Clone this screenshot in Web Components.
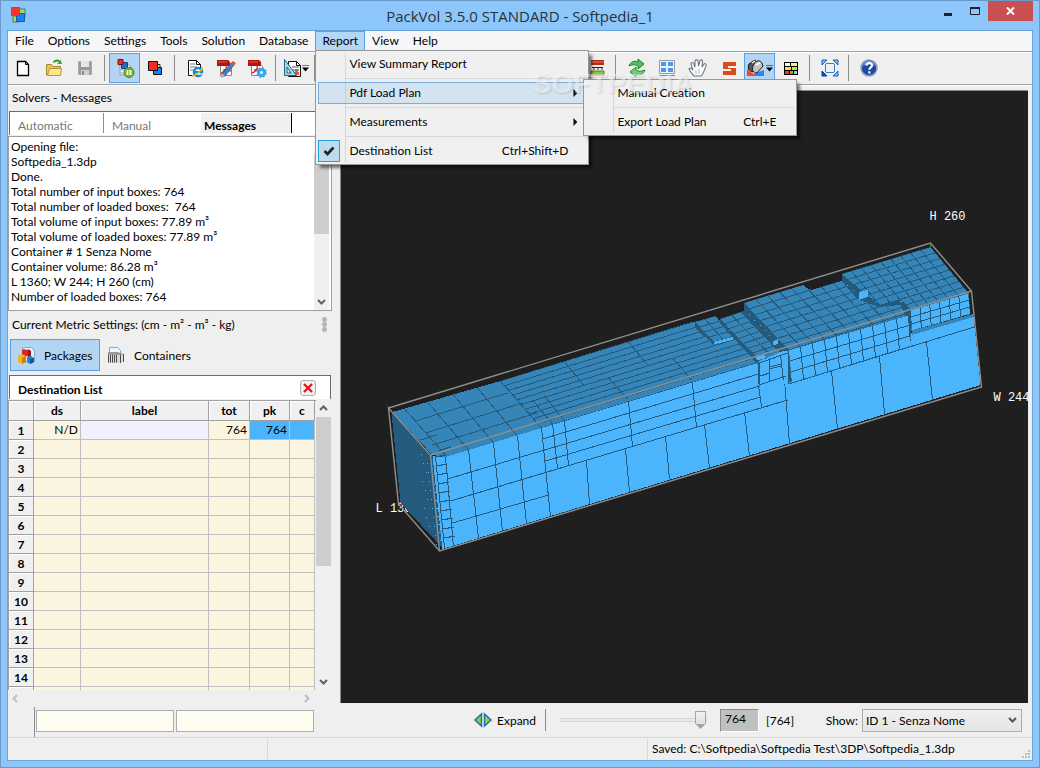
<!DOCTYPE html>
<html lang="en">
<head>
<meta charset="utf-8">
<title>PackVol 3.5.0 STANDARD - Softpedia_1</title>
<style>
  html, body { margin: 0; height: 100%; overflow: hidden; }
  body { font: 12px/15px Lato, "Open Sans", sans-serif; color: #000; background: #efefef; }
</style>
</head>
<body>
<pack-window></pack-window>
<script>
const define = (name, css, html, init) => {
  const tpl = document.createElement('template');
  tpl.innerHTML = `<style>*{box-sizing:border-box}button{font:inherit;color:inherit;margin:0}${css}</style>${html}`;
  customElements.define(name, class extends HTMLElement {
    constructor() {
      super();
      this.attachShadow({ mode: 'open' }).append(tpl.content.cloneNode(true));
    }
    connectedCallback() {
      if (init && !this.ready) { this.ready = true; init(this, this.shadowRoot); }
    }
  });
};

/* ---------- icons, all on a 20 x 20 grid ---------- */
const page = (x, y) => `<path d="M${x} ${y}h8l4 4v11h-12z" fill="#fff" stroke="#111" stroke-width="1"/><path d="M${x + 8} ${y}v4h4" fill="none" stroke="#111"/>`;
const pdf = '<path d="M4.500 4.500v13h11v-9l-4-4z" fill="#fff" stroke="#888"/><path d="M1 2h11l2 2v4H1z" fill="#b8120c"/><path d="M2 4h9" stroke="#e0564c"/><path d="M5 15c4-1 6-5 5-7M7 12c3-1 6 1 8 1" fill="none" stroke="#d3281c" stroke-width="1.300"/>';
const ICONS = {
  app: '<path d="M9 4h8v8H9z" fill="#9edb6b" stroke="#527b4c"/><path d="M5 11h6v6H5z" fill="#9edb6b" stroke="#527b4c"/><path d="M8.500 8.500h8v8h-8z" fill="#1283f5" stroke="#1c5a9c"/><path d="M3.500 2.500h8v8h-8z" fill="#ff302b" stroke="#a34b55"/>',
  fresh: '<path d="M3.500 3.500h8l3 3v11h-11z" fill="#fff" stroke="#000" stroke-width="1.300"/><path d="M11.500 3.500v3h3" fill="none" stroke="#000"/>',
  open: '<path d="M1.500 17V6.500h5l1 2h8V17z" fill="#e9c64f" stroke="#a98a2b"/><path d="M2.500 17.500l2-7h12l-1 7z" fill="#fbe88e" stroke="#b8962f"/><path d="M8 4c2-3 5-3 7-1v-2l2 5h-5l2-1.500c-2-2-3-1-5 .500z" fill="#33a02c"/>',
  save: '<path d="M2.500 3.500h13v13h-13z" fill="#9b9b9b" stroke="#a8a8a8"/><path d="M5 3h8v6H5z" fill="#e6e6e6"/><path d="M5 12h8v5H5z" fill="#cfcfcf"/><path d="M6 13h2v4H6z" fill="#8b8b8b"/>',
  pause: '<path d="M5 7h9l3 3v7H5z" fill="#fff" stroke="#8a98a8"/><path d="M5 12h7M5 15h6" stroke="#6da7d8"/><path d="M6.500 4.500h6v6h-6z" fill="#1272d8" stroke="#123f78"/><path d="M3 1.500h5v5H3z" fill="#fb2722" stroke="#711"/><circle cx="14" cy="14.500" r="5" fill="#74b71c" stroke="#4f8610"/><path d="M12.500 12v5M15.500 12v5" stroke="#fff" stroke-width="1.800"/>',
  cubes: '<path d="M9 6.500h5v4H9z" fill="#f6ee4d" stroke="#222"/><path d="M7.500 9.500h8v7h-8z" fill="#1283f5" stroke="#111"/><path d="M2.500 3.500h9v9h-9z" fill="#fb2722" stroke="#111"/>',
  web: page(3.5, 2.5) + '<path d="M5 6h5M5 9h7M5 12h3" stroke="#777"/><circle cx="13" cy="14" r="4" fill="#fff" stroke="#178ad0" stroke-width="2.600"/><path d="M10 14h7" stroke="#178ad0" stroke-width="2"/><path d="M14 16h5" stroke="#fff" stroke-width="1"/><path d="M7 18c3 0 11-6 10-9" fill="none" stroke="#e8b91f" stroke-width="1.500"/>',
  pdfedit: pdf + '<path d="M6 16l9-11 3 2-9 11-4 1z" fill="#3c83cf" stroke="#214f83" stroke-width=".700"/><path d="M15 5l2-2 3 2-2 2.500z" fill="#e2541f"/><path d="M5 19l1-3 3 2z" fill="#efc48a"/>',
  pdfgear: pdf + '<circle cx="14.500" cy="14.500" r="3" fill="#fff" stroke="#39a5ea" stroke-width="3"/><circle cx="14.500" cy="14.500" r="4.600" fill="none" stroke="#39a5ea" stroke-width="1.400" stroke-dasharray="2 1.600"/>',
  ruler: page(6.5, 3.5) + '<path d="M10 9h7M10 12h7" stroke="#555"/><path d="M11 14h6v3h-6z" fill="#ee5b1c"/><path d="M13 11h3v3h-3z" fill="#2f8fe0"/><path d="M2.500 1.500v16h12z" fill="#a9d9ee" stroke="#20637f"/><path d="M5 9v6h4z" fill="#efefef" stroke="#20637f"/>',
  layers: '<path d="M4 2h13v5H4z" fill="#b62b18"/><path d="M4 4h13" stroke="#e0796a"/><path d="M5 9.500h11" stroke="#222"/><path d="M6 11h2M10 11h2M14 11h2" stroke="#444"/><path d="M4 13h13v4H4z" fill="#8dc63c" stroke="#55802a"/>',
  refresh: '<path d="M3 8c1-4 6-6 9-4V1l6 5-6 5V8c-4-2-6-1-9 0z" fill="#4fc158" stroke="#23822c"/><path d="M19 12c-1 4-6 6-9 4v3l-6-5 6-5v3c4 2 6 1 9 0z" fill="#6dd474" stroke="#23822c"/>',
  panes: '<path d="M2.500 2.500h15v13h-15z" fill="#eaf3fd" stroke="#9a9a9a"/><path d="M4 4h5v4H4zM11 4h5v4h-5zM4 10h5v4H4zM11 10h5v4h-5z" fill="#4a97f0"/><path d="M2 17.500h16" stroke="#888"/>',
  hand: '<path d="M6 18c-2-2-4-5-5-7 1-2 3 0 4 1L3 6c0-2 2-2 3 0l1 3V3c1-2 3-1 3 0l.500 5 1.500-5c1-2 3-1 2.500 1L14 9l2-3c1-1 3 0 2 2-2 4-2 8-5 10z" fill="#fbfbfb" stroke="#6d7683" stroke-width="1.100"/><path d="M8 12v4M11 11v5" stroke="#b6bdc6"/>',
  snake: '<path d="M4 4h13v4H9v2h8v7H4v-4h8v-2H4z" fill="#dd4a1d"/>',
  view: '<path d="M1 11l6 5 11-4v6H1z" fill="#f2432c"/><path d="M10 14h8v4h-8z" fill="#2b86f0"/><path d="M3 6l6-4 3 6-5 6c-4-1-6-4-4-8z" fill="#555" stroke="#111"/><path d="M8 6c2-4 6-4 8-1l1 3-6 7c-4 0-6-4-3-9z" fill="#c4c4c4" stroke="#222"/><path d="M10 7l4-2M6 5l3-2" stroke="#fff" stroke-width="1.500"/>',
  tiles: '<path d="M3 4h14v13H3z" fill="#000"/><path d="M4 5h5v3H4z" fill="#fff"/><path d="M10 5h6v3h-6z" fill="#fff27a"/><path d="M4 9h6v3H4z" fill="#ffdf3c"/><path d="M11 9h5v3h-5z" fill="#b5e655"/><path d="M4 13h4v3H4z" fill="#f0381d"/><path d="M9 13h3v3H9z" fill="#f07a1d"/><path d="M13 13h3v3h-3z" fill="#7fd8f5"/>',
  fit: '<path d="M6 5.500h8M6 14.500h8M5.500 6v8M14.500 6v8" stroke="#2d7fd3"/><path d="M2 2h5L2 7zM18 2v5l-5-5zM18 18h-5l5-5z" fill="#7fc1ee" stroke="#1662b0"/><path d="M2 18v-5l5 5z" fill="#1251c9" stroke="#0d3c97"/>',
  help: '<circle cx="10" cy="10" r="8" fill="#1d48a8" stroke="#9aa2b2" stroke-width="1.600"/><path d="M4 8a6 6 0 0 1 12 0c-4-2-8-2-12 0z" fill="#5f8ae0"/><path d="M7.500 7.500c0-3.500 5.500-3.500 5.500 0 0 2-2.700 1.800-2.700 4.200" fill="none" stroke="#fff" stroke-width="2"/><path d="M9.200 13.300h2.200v2.200H9.200z" fill="#fff"/>',
  packages: '<path d="M6.500 2.500h9l3 3v11h-12z" fill="#e3effb" stroke="#86a5cf"/><path d="M7 4l5 1v6l-6 1V6z" fill="#e1251c"/><path d="M12 4l3 2v5l-3 2z" fill="#a3140e"/><path d="M2 11l4-2 4 2v6l-4 2-4-2z" fill="#f7b51c"/><path d="M6 13l4-2v6l-4 2z" fill="#c98108"/><path d="M11 12l4-1 3 2v4l-4 2-3-2z" fill="#1789d4"/><path d="M14 14l4-1v4l-4 2z" fill="#0c5a97"/>',
  containers: '<path d="M3.500 11V2.500h8l3 3V9" fill="#edf5fe" stroke="#86a5cf"/><path d="M2 7h9l7 2v8l-5 1H2z" fill="#dcdcdc"/><path d="M2.500 7.500v10M4.500 7.500v10M6.500 7.500v10M8.500 7.500v10M10.500 7.500v10M14.500 9v9M17.500 9v8" stroke="#4b4b4b"/><path d="M2 7h9l7 2-5 1H2z" fill="#999"/>',
  expand: '<path d="M8.500 4v12l-6.500-6z" fill="#8cd92d" stroke="#2968ba" stroke-width="1.500"/><path d="M11.500 4v12l6.500-6z" fill="#8cd92d" stroke="#2968ba" stroke-width="1.500"/>'
};
define('ui-icon', ':host{display:block;width:20px;height:20px;flex:none}svg{display:block;width:100%;height:100%}',
  '<svg viewBox="0 0 20 20" aria-hidden="true"></svg>',
  (el, r) => { r.querySelector('svg').innerHTML = ICONS[el.getAttribute('name')]; });

/* ---------- title bar ---------- */
define('title-bar', `
  :host{display:grid;grid-template-columns:100px 1fr 100px;height:29px;align-items:center}
  ui-icon{margin:0 0 2px 1px}
  h1{margin:0;text-align:center;font:400 15px/26px "Open Sans",sans-serif;color:#2b3136}
  .ctl{display:flex;align-self:start;justify-content:flex-end}
  button{border:0;padding:0;background:none;width:27px;height:20px}
  .x{width:45px;background:#c85050}
  svg{display:block;margin:auto}`,
  `<ui-icon name="app"></ui-icon><h1>PackVol 3.5.0 STANDARD - Softpedia_1</h1>
  <div class="ctl"><button aria-label="Minimize"><svg width="10" height="12"><path d="M1 8h8v3H1z" fill="#222"/></svg></button>
  <button aria-label="Maximize"><svg width="10" height="10"><path d="M.500 1.500h9v7h-9z" fill="none" stroke="#222"/><path d="M0 1h10v2H0z" fill="#222"/></svg></button>
  <button class="x" aria-label="Close"><svg width="9" height="8"><path d="M1 .500l7 7M8 .500l-7 7" stroke="#fff" stroke-width="2"/></svg></button></div>`);

/* ---------- menus ---------- */
define('menu-popup', `
  :host{display:block;position:absolute;z-index:5;border:1px solid #979797;padding:2px;
    background:linear-gradient(to right,transparent 27px,#d7d7d7 27px,#d7d7d7 28px,transparent 28px) content-box,linear-gradient(#f0f0f0 0 0);
    box-shadow:4px 4px 3px -1px #0008}`, '<div role="menu"><slot></slot></div>');
define('menu-rule', ':host{display:block;height:7px;padding:3px 0 0 28px}i{display:block;height:1px;background:#d7d7d7}', '<i></i>');
define('menu-row', `
  :host{display:block;position:relative}
  button{display:flex;align-items:center;width:100%;height:22px;border:1px solid transparent;padding:0;background:none;text-align:left}
  :host([open]) button{background:#98c8f055;border-color:#78aee5}
  .mark{width:22px;height:22px;margin:0 9px 0 -1px;display:grid;place-items:center}
  :host([checked]) .mark{background:#bcdcee;border:1px solid #26a0da}
  .mark svg{display:none}:host([checked]) .mark svg{display:block}
  .t,.key{padding-bottom:2px}
  .key{margin-left:auto;padding-right:17px}
  .arrow{display:none}
  :host([sub]) .arrow{display:block;width:4px;height:8px;margin:0 8px 0 auto;background:#111;clip-path:polygon(0 0,100% 50%,0 100%)}
  :host([sub]) .key{display:none}`,
  `<button role="menuitem"><span class="mark"><svg width="12" height="10"><path d="M1.500 5l3 3 6-6.500" fill="none" stroke="#222" stroke-width="2.600"/></svg></span><span class="t"></span><span class="key"></span><span class="arrow"></span></button><slot></slot>`,
  (el, r) => {
    r.querySelector('.t').textContent = el.getAttribute('label');
    r.querySelector('.key').textContent = el.getAttribute('key') || '';
    if (el.hasAttribute('checked')) {
      const b = r.querySelector('button');
      b.setAttribute('role', 'menuitemcheckbox'); b.setAttribute('aria-checked', 'true');
    }
  });
define('menu-item', `
  :host{display:block;position:relative}
  button{display:block;height:20px;border:1px solid transparent;padding:0 6px 2px;background:none}
  :host([open]) button{background:#b3d6f9;border-color:#5ea2e2}`,
  '<button></button><slot></slot>',
  (el, r) => { r.querySelector('button').textContent = el.getAttribute('label'); });
define('menu-bar', `
  :host{display:flex;height:21px;background:#f5f6f7;border-bottom:1px solid #a0a0a0}
  .main{top:19px;left:0;width:274px}
  .sub{top:-3px;left:265px;width:214px}`,
  `<menu-item label="File"></menu-item><menu-item label="Options"></menu-item><menu-item label="Settings"></menu-item><menu-item label="Tools"></menu-item><menu-item label="Solution"></menu-item><menu-item label="Database"></menu-item>
  <menu-item label="Report" open>
    <menu-popup class="main">
      <menu-row label="View Summary Report"></menu-row><menu-rule></menu-rule>
      <menu-row label="Pdf Load Plan" sub open>
        <menu-popup class="sub"><menu-row label="Manual Creation"></menu-row><menu-rule></menu-rule><menu-row label="Export Load Plan" key="Ctrl+E"></menu-row></menu-popup>
      </menu-row><menu-rule></menu-rule>
      <menu-row label="Measurements" sub></menu-row><menu-rule></menu-rule>
      <menu-row label="Destination List" key="Ctrl+Shift+D" checked></menu-row>
    </menu-popup>
  </menu-item>
  <menu-item label="View"></menu-item><menu-item label="Help"></menu-item>`);

/* ---------- toolbar ---------- */
define('tool-button', `
  :host{display:block;flex:none}
  button{display:flex;align-items:center;justify-content:center;width:31px;height:30px;border:1px solid transparent;padding:0;background:none}
  :host([on]) button{background:#b3d4f3;border-color:#5b9fe0}
  i{display:none;flex:none;width:7px;height:7px;background:#000;clip-path:polygon(0 0,100% 0,100% 14%,0 14%,0 42%,100% 42%,50% 100%,0 42%)}
  :host([drop]) i{display:block}`,
  '<button><ui-icon></ui-icon><i></i></button>',
  (el, r) => {
    const n = el.getAttribute('icon');
    r.querySelector('button').setAttribute('aria-label', n);
    const old = r.querySelector('ui-icon'), ic = document.createElement('ui-icon');
    ic.setAttribute('name', n); old.replaceWith(ic);
  });
define('tool-bar', `
  :host{display:flex;height:33px;border-top:1px solid #fff;border-bottom:1px solid #a0a0a0}
  hr{flex:none;width:1px;height:26px;margin:2px 4px 0 3px;border:0;background:#8c8c8c}
  .rest{display:flex;margin-left:262px}`,
  ['fresh', 'open', 'save', '|', 'pause+', 'cubes', '|', 'web', 'pdfedit', 'pdfgear', '|', 'ruler*', '|'].map(tool).join('') +
  '<div class="rest">' + ['layers', '|', 'refresh', 'panes', 'hand', 'snake', 'view+*', 'tiles', '|', 'fit', '|', 'help'].map(tool).join('') + '</div>');
function tool(t) {
  return t === '|' ? '<hr>' : `<tool-button icon="${t.replace(/[+*]/g, '')}"${t.includes('+') ? ' on' : ''}${t.includes('*') ? ' drop' : ''}></tool-button>`;
}

/* ---------- scroll bar ---------- */
const chevron = (cls, d, c) => `<svg class="${cls}" width="9" height="9" viewBox="0 0 9 9"><path d="${d}" fill="none" stroke="${c}" stroke-width="2"/></svg>`;
define('scroll-bar', `
  :host{display:flex;flex-direction:column;align-items:center;width:15px;background:#f0f0f0}
  svg{flex:none;margin:4px 0}
  .track{flex:1;width:100%}
  .thumb{width:100%;height:var(--len,50%);background:#cdcdcd}`,
  chevron('u', 'M1 6l3.500-3.500L8 6', '#606060') + '<div class="track"><div class="thumb"></div></div>' + chevron('d', 'M1 3l3.500 3.500L8 3', '#606060'));

/* ---------- solver messages ---------- */
define('message-panel', `
  :host{display:block;width:324px}
  h2{margin:0;font:inherit;line-height:23px;padding-left:4px;height:25px}
  .tabs{display:flex;height:24px;margin-left:1px;border:solid #6b6b6b;border-width:1px 0 0 1px;background:#fff;padding-top:1px}
  .tabs button{width:94px;height:20px;margin:0;border:0;border-right:1px solid #8c8c8c;background:none;padding:4px 0 0 8px;text-align:left;color:#787878;line-height:15px}
  .tabs button:nth-child(2){border-right:0;width:97px}
  .tabs .on{width:91px;padding-left:3px;font-weight:700;color:#000;background:#f0f0f0;border-right:1px solid #000}
  .list{display:flex;height:175px;margin-top:1px;border:1px solid #a0a0a0;background:#fff}
  pre{flex:1;margin:0;padding:2px 0 0 2px;font:inherit;white-space:pre}
  scroll-bar{margin-right:2px;--len:80px}`,
  `<h2>Solvers - Messages</h2>
  <div class="tabs" role="tablist"><button role="tab">Automatic</button><button role="tab">Manual</button><button role="tab" class="on" aria-selected="true">Messages</button></div>
  <div class="list"><pre>Opening file:
Softpedia_1.3dp
Done.
Total number of input boxes: 764
Total number of loaded boxes:  764
Total volume of input boxes: 77.89 m³
Total volume of loaded boxes: 77.89 m³
Container # 1 Senza Nome
Container volume: 86.28 m³
L 1360; W 244; H 260 (cm)
Number of loaded boxes: 764</pre><scroll-bar></scroll-bar></div>`);

/* ---------- metric line and page switch ---------- */
define('mode-switch', `
  :host{display:block}
  .metric{display:flex;justify-content:space-between;align-items:center;height:28px;padding:0 5px 2px 4px}
  .grip{width:5px;height:15px;background:radial-gradient(circle,#b4b4b4 2px,#0000 3px) 0 0/5px 5px}
  .row{display:flex;padding-left:2px}
  button{display:flex;align-items:center;gap:8px;width:90px;height:32px;padding:0 0 0 5px;border:1px solid transparent;background:none}
  button + button{width:auto}
  .on{background:#b3d4f3;border-color:#5b9fe0}`,
  `<div class="metric"><span>Current Metric Settings: (cm - m² - m³ - kg)</span><span class="grip"></span></div>
  <div class="row"><button class="on"><ui-icon name="packages"></ui-icon>Packages</button><button><ui-icon name="containers"></ui-icon>Containers</button></div>`);

/* ---------- destination list ---------- */
define('destination-list', `
  :host{display:flex;flex-direction:column;flex:1;min-height:0}
  header{display:flex;align-items:center;justify-content:space-between;height:24px;margin:4px 1px 0;padding:0 14px 0 8px;background:#fff;border:solid #6b6b6b;border-width:1px 1px 0 1px}
  h2{margin:0;padding-top:3px;font-size:12px;line-height:15px}
  header button{width:16px;height:16px;padding:0;border:1px solid #adb2b5;border-radius:3px;background:#f0f0f0}
  header svg{display:block;margin:auto}
  .body{display:flex;flex:1;min-height:0;margin-top:1px}
  .clip{flex:1;min-height:0;overflow:hidden;border:solid #a0a0a0;border-width:1px 0 0 1px}
  table{width:306px;border-collapse:separate;border-spacing:0;table-layout:fixed}
  th{padding:0;height:19px;line-height:15px;font-weight:700;background:#f0f0f0;border:solid #a0a0a0;border-width:0 1px 1px 0;box-shadow:inset 1px 1px #fff}
  thead th{height:20px}
  td{padding:0 2px 2px;height:19px;line-height:15px;text-align:right;background:#faf4e0;border:solid #c0c0c0;border-width:0 1px 1px 0}
  .pick{background:#4cb4fc}.lab{background:#f0f0ff}
  scroll-bar{width:15px;margin-right:1px;--len:149px}
  .h{display:flex;justify-content:space-between;padding:4px 21px 0 3px;height:17px}
  form{display:flex;gap:2px;height:30px;margin:0 18px 0 26px;padding:3px 0 4px 1px;border-left:1px solid #8c8c8c}
  form input{flex:1;min-width:0;height:22px;border:1px solid #abadb3;background:#fffcf0;font:inherit}`,
  `<header><h2>Destination List</h2><button aria-label="Close list"><svg width="10" height="10"><path d="M1 1l8 8M9 1l-8 8" stroke="#f00d0d" stroke-width="2.200"/></svg></button></header>
  <div class="body"><div class="clip"><table><colgroup><col style="width:25px"><col style="width:47px"><col style="width:128px"><col style="width:41px"><col style="width:40px"><col style="width:25px"></colgroup>
  <thead><tr><th></th><th>ds</th><th>label</th><th>tot</th><th>pk</th><th>c</th></tr></thead><tbody></tbody></table></div><scroll-bar></scroll-bar></div>
  <div class="h">${chevron('', 'M6 1L2.500 4.500 6 8', '#bfbfbf')}${chevron('', 'M3 1l3.500 3.500L3 8', '#bfbfbf')}</div>
  <form><input aria-label="First value"><input aria-label="Second value"></form>`,
  (el, r) => {
    let rows = '<tr><th scope="row">1</th><td>N/D</td><td class="lab"></td><td>764</td><td class="pick">764</td><td class="pick"></td></tr>';
    for (let i = 2; i < 16; i++) rows += `<tr><th scope="row">${i < 15 ? i : ''}</th>${'<td></td>'.repeat(5)}</tr>`;
    r.querySelector('tbody').innerHTML = rows;
  });

/* ---------- 3D view ---------- */
define('load-view', `
  :host{display:block;min-height:0;border:solid #8a8a8a;border-width:1px 0 0 1px;background:#1f1f1f;overflow:hidden}
  svg{display:block;width:100%;height:100%;shape-rendering:crispEdges}
  text{font:12px/15px "Liberation Mono",monospace;fill:#fff}`,
  '<svg viewBox="341 91 686 612" role="img" aria-label="Loaded container"></svg>',
  (el, r) => {
    const TOP = '#3585b8', FRONT = '#4ab5fc', SIDE = '#245a7c';
    let out = '', id = 0;
    const poly = (pts, fill) => { out += `<polygon points="${pts}" fill="${fill}"/>`; };
    const path = (d, c = SIDE) => { out += `<path d="${d}" fill="none" stroke="${c}"/>`; };
    const mix = (a, b, t) => [a[0] + (b[0] - a[0]) * t, a[1] + (b[1] - a[1]) * t].map(v => Math.round(v * 10) / 10);
    /* lines splitting the quad a-b-c-d into nu by nv cells */
    const grid = (a, b, c, d, nu, nv) => {
      let s = '';
      for (let i = 0; i <= nu; i++) s += `M${mix(a, b, i / nu)}L${mix(d, c, i / nu)}`;
      for (let j = 0; j <= nv; j++) s += `M${mix(a, d, j / nv)}L${mix(b, c, j / nv)}`;
      return s;
    };
    const clipped = (pts, fill, d) => {
      id++;
      poly(pts, fill);
      out += `<clipPath id="c${id}"><polygon points="${pts}"/></clipPath><g clip-path="url(#c${id})"><path d="${d}" fill="none" stroke="${SIDE}"/></g>`;
    };
    out += '<text x="375" y="512">L 136</text><text x="929" y="220">H 260</text><text x="993" y="401">W 244</text>';
    poly('391,413 432,456 442,548 400,503', SIDE);
    poly('719,322 743,311 787,349 757,363', SIDE);
    /* long top surface */
    clipped('392,412 500,381 691,322 720,320 757,363 445,457 432,455', TOP,
      'M405 410L445 455M428 403L468 450M453 395L493 443M477 388L517 436M500 381L541 428' +
      'M415 421L507 393M425 433L522 403M420 440L436 435M432 445L536 413M438 451L450 447' +
      'M532 400L552 424M544 396L564 421M628 342L648 366M673 359L691 380M565 363L583 385M608 378L627 399' +
      grid([500, 381], [800, 289], [842, 337], [541, 428], 1, 10));
    /* front surface */
    poly('432,456 445,457 757,363 787,349 907,314 911,333 973,317 980,385 442,549', FRONT);
    path('M445 457L453 547M468 450L478 538M493 443L502 532M517 436L526 524M541 428L550 517M552 424L557 468M564 421L568 465' +
      'M447 479L544 450M450 501L787 400M452 523L548 495M542 439L758 374M544 450L759 386M545 461L760 397' +
      'M628 401L632 446M692 383L696 427M758 385L761 407M586 461L589 504M625 449L629 492M665 436L669 479M704 425L709 468M744 412L749 456M784 380L789 444' +
      'M831 371L837 429M879 357L884 414M926 342L932 400M788 384L974 327');
    let rungs = 'M435 457L444 548';
    for (let i = 0; i < 10; i++) rungs += `M${435 + i} ${457 + i * 9}L${445 + i} ${455 + i * 9}`;
    path(rungs);
    /* single raised box */
    poly('694,322 713,342 714,346 694,327', SIDE);
    clipped('694,322 715,316 732,337 713,342', TOP, grid([694, 322], [715, 316], [732, 337], [713, 342], 2, 4));
    poly('713,342 732,337 732,340 714,344', FRONT);
    /* short row beside it */
    poly('719,319 757,358 760,386 757,364 719,323', SIDE);
    clipped('719,319 740,312 780,354 757,358', TOP, grid([719, 319], [743, 311], [781, 350], [757, 358], 2, 8));
    /* notched front between the two levels */
    poly('757,362 787,349 790,383 759,386', FRONT);
    poly('757,358 778,350 778,353 759,361', TOP);
    path('M758 363V384M759 363V384M769 358V381M769 367L780 364M769 369L780 366M759 385L785 376M760 376L769 373M780 355L783 380M759 363L787 353');
    poly('755,357 764,355 765,358 757,360', FRONT);
    /* middle level */
    poly('743,303 743,311 778,350 787,351 788,383 791,381 790,349', SIDE);
    clipped('743,303 803,285 806,288 811,290 841,281 880,306 900,302 908,315 788,350', TOP,
      grid([743, 303], [863, 266], [908, 313], [788, 350], 10, 8));
    clipped('788,350 908,315 911,346 791,383', FRONT, grid([788, 350], [908, 315], [911, 346], [791, 383], 10, 3));
    poly('772,342 777,339 777,344 773,345', FRONT);
    /* upper right level */
    poly('841,274 841,281 857,299 878,307 900,305 905,316 911,316 911,309 900,298', SIDE);
    clipped('841,274 930,247 968,293 910,309 900,299 879,305', TOP,
      grid([841, 274], [930, 247], [968, 293], [879, 320], 9, 8));
    poly('858,292 867,290 867,297 858,300', FRONT);
    clipped('910,310 968,293 970,314 911,331', FRONT, grid([910, 310], [968, 293], [970, 314], [911, 331], 6, 3));
    poly('911,331 972,314 973,317 911,335', TOP);
    poly('907,310 910,310 911,335 909,335', SIDE);
    path('M748 314h1M753 320h1M759 325h1M764 330h1M768 335h1M704 337h1M708 341h1M728 330h1M846 285h1M852 290h1M899 301h2', FRONT);
    let dots = '';
    for (let i = 0; i < 10; i++) dots += `M${420 + i % 3 * 2 + (i >> 1)} ${454 + i * 9}h1M${426 + i} ${463 + i * 9}h1M${430 + i} ${468 + i * 8}h2`;
    path(dots, FRONT);
    /* container frame */
    out += '<path d="M388 408L930 243L971 291L981 387L439 551L398 504L388 408L430 455L439 551M430 455L971 291" fill="none" stroke="#8f8f8f" stroke-width="1.400" shape-rendering="geometricPrecision"/>';
    path('M930 243v4', '#2aa02a');
    path('M398 502h3', '#c33');
    r.querySelector('svg').innerHTML = out;
  });

/* ---------- bar below the view ---------- */
define('view-controls', `
  :host{display:flex;align-items:center;height:34px}
  button{display:flex;align-items:center;gap:4px;width:72px;height:26px;padding:0;border:0;background:none;margin-left:133px}
  hr{flex:none;width:1px;height:22px;margin:0 15px 0 0;border:0;background:#8c8c8c}
  input[type=range]{appearance:none;flex:0 1 146px;min-width:60px;height:20px;margin:0;background:none}
  input[type=range]::-webkit-slider-runnable-track{height:4px;background:#e7eaea;border:1px solid #d6d6d6}
  input[type=range]::-webkit-slider-thumb{appearance:none;width:11px;height:18px;margin-top:-8px;clip-path:polygon(0 0,100% 0,100% 70%,50% 100%,0 70%);background:linear-gradient(#f2f2f2,#e0e0e0) 1px 1px/9px 12px no-repeat,#a5a5a5}
  .n{width:39px;height:23px;margin-left:13px;padding:0 0 4px 4px;border:1px solid;border-color:#8c8c8c #fff #fff #8c8c8c;background:#c0c0c0;font:inherit}
  .of{margin-left:7px}
  label{margin-left:auto;margin-right:4px}
  select{appearance:none;width:160px;height:23px;margin-right:10px;padding:0 3px;border:1px solid #acacac;border-radius:0;font:inherit;color:#000;
    background:url("data:image/svg+xml,%3Csvg xmlns='http://www.w3.org/2000/svg' width='9' height='6'%3E%3Cpath d='M1 1l3.500 3.500L8 1' fill='none' stroke='%23555' stroke-width='2'/%3E%3C/svg%3E") right 4px center no-repeat,linear-gradient(#f0f0f0,#e5e5e5)}`,
  `<button><ui-icon name="expand"></ui-icon>Expand</button><hr>
  <input type="range" min="0" max="764" value="764" aria-label="Loaded boxes">
  <input class="n" value="764" aria-label="Box count"><span class="of">[764]</span>
  <label for="show">Show:</label><select id="show"><option>ID 1 - Senza Nome</option></select>`);

/* ---------- status bar ---------- */
define('status-bar', `
  :host{display:flex;height:23px;border-top:1px solid #d7d7d7;padding:1px 0}
  span{line-height:20px;padding-left:4px;border-right:1px solid #d7d7d7}
  .a{width:260px}.b{width:380px}.c{flex:1;border:0}
  svg{align-self:flex-end;margin:0 1px}`,
  `<span class="a"></span><span class="b"></span><span class="c">Saved: C:\\Softpedia\\Softpedia Test\\3DP\\Softpedia_1.3dp</span>
  <svg width="9" height="9"><path d="M6 0h2v2H6zM3 3h2v2H3zM6 3h2v2H6zM0 6h2v2H0zM3 6h2v2H3zM6 6h2v2H6z" fill="#bcbcbc"/></svg>`);

/* ---------- window ---------- */
define('pack-window', `
  :host{display:flex;flex-direction:column;position:relative;height:100vh;box-sizing:border-box;border:1px solid #6a9ac6;padding:0 6px 6px;background:#8cc6fb}
  .client{display:flex;flex-direction:column;flex:1;min-height:0;border:1px solid #6aa3d8;background:#efefef}
  main{display:grid;grid-template-columns:324px minmax(0,1fr);column-gap:8px;flex:1;min-height:0;border-top:1px solid #fff}
  .left{display:flex;flex-direction:column;min-height:0}
  .right{display:flex;flex-direction:column;min-height:0;padding-top:4px}
  load-view{flex:1;margin-right:4px}
  .mark{position:absolute;top:66px;left:532px;z-index:9;pointer-events:none;font:700 28px/34px "Liberation Sans",sans-serif;color:#ffffff80;text-shadow:1px 1px 2px #0002}`,
  `<title-bar></title-bar>
  <div class="client"><menu-bar></menu-bar><tool-bar></tool-bar>
    <main><div class="left"><message-panel></message-panel><mode-switch></mode-switch><destination-list></destination-list></div>
    <div class="right"><load-view></load-view><view-controls></view-controls></div></main>
    <status-bar></status-bar></div>
  <div class="mark">SOFTPEDIA</div>`);
</script>
</body>
</html>
